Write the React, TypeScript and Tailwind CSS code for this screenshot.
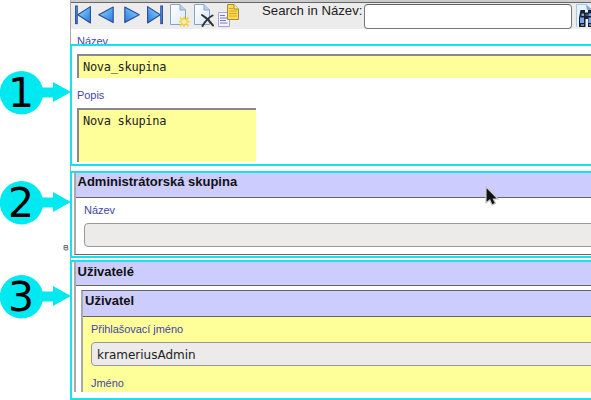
import React from "react";

const sans = "font-['Liberation_Sans',sans-serif]";
const mono = "font-['DejaVu_Sans_Mono',monospace] text-[12px] leading-[16px] tracking-[-0.3px] text-[#222]";
const label = "text-[11px] leading-[14px] tracking-[-0.05px] text-[#4545a5] whitespace-nowrap";
const heading = "border-b border-[#666] bg-[#ccccff] text-[13px] font-bold leading-[16px] text-[#111]";

function Blues() {
  return (
    <defs>
      <linearGradient id="blue" x1="0" y1="0" x2="1" y2="1">
        <stop offset="0" stopColor="#a4d8fb" />
        <stop offset="0.5" stopColor="#5cabf0" />
        <stop offset="1" stopColor="#2a72d8" />
      </linearGradient>
      <linearGradient id="page" x1="0" y1="0" x2="1" y2="1">
        <stop offset="0" stopColor="#fff" />
        <stop offset="1" stopColor="#d8e8f8" />
      </linearGradient>
    </defs>
  );
}

function Nav({ kind }: { kind: "first" | "prev" | "next" | "last" }) {
  const flip = kind === "next" || kind === "last";
  const bar = kind === "first" || kind === "last";
  return (
    <svg width="16" height="20" viewBox="0 0 16 20" className="shrink-0">
      <Blues />
      <g transform={flip ? "translate(16 0) scale(-1 1)" : undefined} fill="url(#blue)" stroke="#2a4c9c" strokeWidth="1.1">
        {bar && <rect x="0.6" y="1" width="1.6" height="17.6" />}
        <path d={bar ? "M15.4 1.6V18L2.8 9.8Z" : "M15.2 2V17.6L0.8 9.8Z"} strokeLinejoin="round" />
      </g>
    </svg>
  );
}

function Page() {
  return (
    <>
      <Blues />
      <path d="M.5 1.5H10L15.5 7V21.5H.5Z" fill="url(#page)" stroke="#86a3cc" />
      <path d="M10 1.5V7H15.5" fill="#b9d3f2" stroke="#86a3cc" />
    </>
  );
}

function NewIcon() {
  return (
    <svg width="20" height="25" viewBox="0 0 20 25" className="shrink-0">
      <Page />
      <path d="M14 13.5V24M9 18.7H19.5M10 14.5L18.5 23M18.5 14.5L10 23" stroke="#f8d13c" strokeWidth="1.8" />
      <circle cx="14.2" cy="18.7" r="2.2" fill="#fff3a0" />
    </svg>
  );
}

function DeleteIcon() {
  return (
    <svg width="20" height="25" viewBox="0 0 20 25" className="shrink-0">
      <Page />
      <path d="M8 12C12 14.5 16 18 19 22.5M18.5 12.5C14 15 11 18.5 8.5 23" fill="none" stroke="#333" strokeWidth="2" strokeLinecap="round" />
    </svg>
  );
}

function CopyIcon() {
  return (
    <svg width="21" height="25" viewBox="0 0 21 25" className="shrink-0">
      <path d="M.5 9.5H11.5V23.5H.5Z" fill="#f4f4ff" stroke="#a5a5dd" />
      <path d="M2 12.5H7M2 15H10M2 17.5H8M2 20H9.5" stroke="#7777c5" />
      <path d="M9.5 1.5H16L20.5 6V16.5H9.5Z" fill="#ffdc49" stroke="#a0894a" />
      <path d="M16 1.5V6H20.5" fill="#fff1a0" stroke="#a0894a" />
      <path d="M11 5.5H15M11 8H19M11 10.5H19M11 13H19" stroke="#d4a72c" />
    </svg>
  );
}

function Binoculars() {
  return (
    <svg width="16" height="25" viewBox="0 0 16 25" className="block">
      <path d="M.5 24V1.5H10L16 7V24" fill="#e8f2fd" stroke="#a9c7e8" />
      <path d="M10 1.5L11 7L16 7Z" fill="#7caade" />
      <path d="M4.5 7H9V9.5H12V7H16V24H12V16H9.5V24H3V15Z" fill="#17202f" />
      <path d="M5.5 10.5H8V13H5.5ZM4 14.5H8V20H4ZM12.5 10.5H16V13H12.5ZM12.5 14.5H16V20H12.5Z" fill="#7ba6e6" />
      <path d="M9.5 12H12" stroke="#79879e" />
      <path d="M5 22H8M13 22H16" stroke="#d5e3f5" />
    </svg>
  );
}

function Callout({ n, top }: { n: string; top: string }) {
  return (
    <div className={`absolute left-0 ${top} h-[44px] w-[71px]`}>
      <svg width="71" height="44" viewBox="0 0 71 44" className="absolute inset-0">
        <circle cx="21.5" cy="21.8" r="21.7" fill="#00e8f0" />
        <path d="M40 16.5H53V11L71 21L53 31V26.5H40Z" fill="#00e8f0" />
      </svg>
      <span className="absolute left-0 top-0 w-[42px] text-center font-['DejaVu_Sans',sans-serif] text-[41px] leading-[45px] text-black">{n}</span>
    </div>
  );
}

export default function App() {
  return (
    <div className={`relative h-[400px] w-[591px] overflow-hidden bg-white text-black ${sans}`}>
      <main className="ml-[70px] h-[392px] w-[521px] overflow-hidden border-l border-[#aaa]">
        <div className="h-[2px] bg-[#ccc]" />
        <header className="flex h-[27px] items-start border-t border-[#666] bg-[#ececec]">
          <div className="flex w-[99px] shrink-0 pl-[4px] pt-[2px]">
            <Nav kind="first" />
            <div className="ml-[7px]"><Nav kind="prev" /></div>
            <div className="ml-[10px]"><Nav kind="next" /></div>
            <div className="ml-[7px]"><Nav kind="last" /></div>
          </div>
          <div className="flex shrink-0 gap-[4px]">
            <NewIcon />
            <DeleteIcon />
            <CopyIcon />
          </div>
          <span className="ml-[23px] w-[102px] shrink-0 whitespace-nowrap text-[13.2px] leading-[15px] text-[#222]">Search in Název:</span>
          <div className="h-[25px] w-[208px] mt-px shrink-0 rounded-[4px] border border-[#777] border-t-[#665f5f] bg-white" />
          <div className="ml-[4px] w-[16px] shrink-0"><Binoculars /></div>
        </header>

        <section className="h-[143px] pl-[6px] pt-[5px]">
          <div className={label}>Název</div>
          <div className={`mt-[6px] h-[24px] border-l-2 border-t-2 border-[#888] bg-[#ffff99] pl-[4px] pt-[3px] ${mono}`}>Nova_skupina</div>
          <div className={`mt-[10px] ${label}`}>Popis</div>
          <div className={`mt-[6px] h-[54px] w-[179px] border-l-2 border-t-2 border-[#888] bg-[#ffff99] pl-[4px] pt-[3px] ${mono}`}>Nova skupina</div>
        </section>

        <section className="ml-[3px] h-[83px] border-b border-l-2 border-b-[#666] border-l-[#aaa]">
          <h2 className={`h-[26px] pl-[1.5px] pt-[2px] ${heading}`}>Administrátorská skupina</h2>
          <div className="pl-[8px] pt-[5px]">
            <div className={label}>Název</div>
            <div className="mt-[6px] h-[24px] w-[530px] rounded-[4px] border border-[#999] bg-[#ecebea]" />
          </div>
        </section>

        <section className="ml-[3px] mt-[6px] border-l-2 border-[#aaa]">
          <h2 className={`h-[25px] pl-[1.5px] pt-[3px] ${heading}`}>Uživatelé</h2>
          <div className="bg-white pl-[5px] pt-[4px]">
            <div className="border-l-2 border-t border-l-[#aaa] border-t-[#666] bg-[#ffff99]">
              <h3 className={`h-[26px] pl-[2px] pt-[2px] ${heading}`}>Uživatel</h3>
              <div className="h-[75px] overflow-hidden pl-[8px] pt-[5px]">
                <div className={label}>Přihlašovací jméno</div>
                <div className="mt-[6px] h-[24px] w-[530px] rounded-[4px] border border-[#999] bg-[#ecebea] pl-[5px] pt-[4px] font-['DejaVu_Sans',sans-serif] text-[12px] leading-[16px] text-[#222]">krameriusAdmin</div>
                <div className={`mt-[10px] ${label}`}>Jméno</div>
              </div>
            </div>
          </div>
        </section>
      </main>

      <div className="absolute left-[70px] top-[44px] h-[122px] w-[530px] border-2 border-[#16e2ee]" />
      <div className="absolute left-[70px] top-[171px] h-[87px] w-[530px] border-2 border-[#16e2ee]" />
      <div className="absolute left-[70px] top-[260px] h-[140px] w-[530px] border-2 border-[#16e2ee]" />

      <Callout n="1" top="top-[71px]" />
      <Callout n="2" top="top-[181px]" />
      <Callout n="3" top="top-[275px]" />

      <svg className="absolute left-[63px] top-[244px]" width="6" height="8" viewBox="0 0 6 8">
        <path d="M1 1.5H4.5L5 5.5Q3 7 1 5.5ZM1 3.5H5" fill="#ddd" stroke="#777" />
      </svg>
      <svg className="absolute left-[485px] top-[186px]" width="15" height="21" viewBox="0 0 15 21">
        <path d="M1 .8V17L4.8 14L7 19L10.5 17.3L8.4 13H13Z" fill="#111" stroke="#c8c8cc" strokeWidth="1.2" />
      </svg>
    </div>
  );
}
